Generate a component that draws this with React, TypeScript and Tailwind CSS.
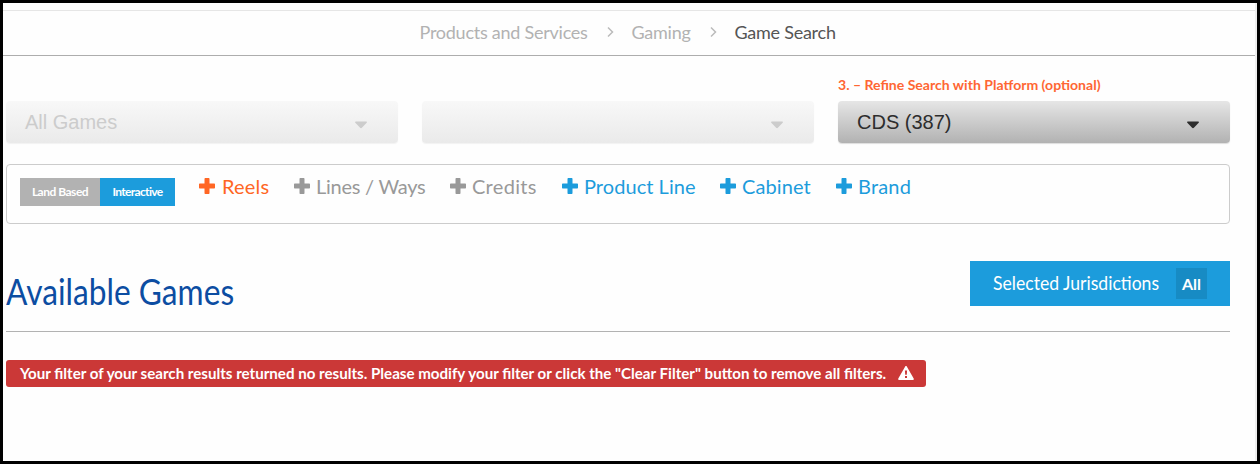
import React from "react";

function Caret({ className }: { className: string }) {
  return (
    <svg className={className} width="12" height="8" viewBox="0 0 12 8" fill="currentColor">
      <path d="M0.8 0.5h10.4c.8 0 1 .7.5 1.200L6.900 6.800c-.5.5-1.300.5-1.800 0L.3 1.700C-.2 1.200 0 .5.8.5z" />
    </svg>
  );
}

function Select({ label, disabled }: { label: string; disabled?: boolean }) {
  return (
    <button
      type="button"
      disabled={disabled}
      className={
        disabled
          ? "flex h-[42px] w-[392px] items-center justify-between rounded-[4px] bg-linear-to-b from-[#f8f8f8] to-[#eaeaea] pr-[31px] pl-[19px] text-[#cccccc] shadow-[0_1px_1px_#f2f2f2]"
          : "flex h-[42px] w-[392px] items-center justify-between rounded-[4px] bg-linear-to-b from-[#e6e6e6] to-[#b2b2b2] pr-[31px] pl-[19px] text-[#2d2d2d] shadow-[0_1px_1px_#dddddd]"
      }
    >
      <span className="font-['Liberation_Sans',Arial,sans-serif] text-[20px] leading-[42px]">{label}</span>
      <Caret className="mt-[5px]" />
    </button>
  );
}

function Plus() {
  return (
    <svg width="16" height="16" viewBox="0 0 16 16" fill="currentColor" className="mt-[-1px] shrink-0">
      <path d="M6.500 0h3c.6 0 1 .4 1 1v4.500H15c.6 0 1 .4 1 1v3c0 .6-.4 1-1 1h-4.500V15c0 .6-.4 1-1 1h-3c-.6 0-1-.4-1-1v-4.500H1c-.6 0-1-.4-1-1v-3c0-.6.4-1 1-1h4.500V1c0-.6.4-1 1-1z" />
    </svg>
  );
}

function Chevron() {
  return (
    <svg width="7" height="12" viewBox="0 0 7 12" fill="none" stroke="#bbbbbb" strokeWidth="1.5" className="mt-[-2px]">
      <path d="M1 1.500L5.500 6L1 10.500" />
    </svg>
  );
}

const filters = [
  { label: "Reels", style: "w-[95px] text-[#ff6624]", text: "pl-px tracking-[0.2px]" },
  { label: "Lines / Ways", style: "w-[156px] text-[#999999]", text: "tracking-[-0.25px]" },
  { label: "Credits", style: "w-[112px] text-[#999999]", text: "tracking-[0.3px]" },
  { label: "Product Line", style: "w-[158px] text-[#1c9cdc]", text: "tracking-[0.05px]" },
  { label: "Cabinet", style: "w-[116px] text-[#1c9cdc]", text: "tracking-[0.1px]" },
  { label: "Brand", style: "w-[90px] text-[#1c9cdc]", text: "tracking-[0.2px]" },
];

export default function App() {
  return (
    <div className="h-[464px] w-[1260px] overflow-hidden border-[3px] border-black bg-[#fefefe] font-['Lato',sans-serif]">
      <div className="h-full w-[1254px] border-r-2 border-[#eeeeee]">
        <div className="h-2 border-b border-[#e6e6e6]" />
        <nav className="flex h-[45px] items-center border-b border-[#adadad] pl-[416.5px] text-[18px] whitespace-nowrap text-[#b2b2b2]">
          <span className="mt-[-2px] w-[187px] tracking-[-0.25px]">Products and Services</span>
          <Chevron />
          <span className="mt-[-2px] ml-[18px] w-[78px] tracking-[-0.25px]">Gaming</span>
          <Chevron />
          <span className="mt-[-2px] ml-[18px] tracking-[-0.25px] text-[#555555]">Game Search</span>
        </nav>
        <main className="ml-[3px] w-[1224px]">
          <section className="flex h-[108px] gap-6 pt-[19px]">
            <div className="pt-[26px]">
              <Select label="All Games" disabled />
            </div>
            <div className="pt-[26px]">
              <Select label="" disabled />
            </div>
            <div>
              <div className="h-[26px] text-[14.06px] leading-[20px] font-bold text-[#ff6633]">3. – Refine Search with Platform (optional)</div>
              <Select label="CDS (387)" />
            </div>
          </section>
          <section className="flex h-[60px] rounded-[4px] border border-[#cccccc] pl-[13px]">
            <div className="mt-[13px] flex h-7 text-[12px] leading-[28px] font-bold whitespace-nowrap text-white">
              <span className="w-20 bg-[#b2b2b2] text-center tracking-[-0.5px]">Land Based</span>
              <span className="w-[75px] bg-[#1c9cdc] text-center tracking-[-0.65px]">Interactive</span>
            </div>
            <div className="mt-[7px] ml-6 flex h-7 text-[20px]">
              {filters.map((f) => (
                <div key={f.label} className={"flex items-center gap-[6px] whitespace-nowrap " + f.style}>
                  <Plus />
                  <span className={f.text}>{f.label}</span>
                </div>
              ))}
            </div>
          </section>
          <section className="flex h-[108px] justify-between border-b border-[#b2b2b2] pt-[37px]">
            <h1 className="origin-left scale-x-[0.88] pt-[6px] text-[36px] leading-[48px] whitespace-nowrap text-[#0c4da2]">Available Games</h1>
            <button type="button" className="flex h-[45px] w-[260px] items-center bg-[#1c9cdc] pl-[23px] text-white">
              <span className="mt-[-4px] w-[183px] origin-left scale-x-[0.88] text-left text-[20px] whitespace-nowrap">Selected Jurisdictions</span>
              <span className="h-[31px] w-[31px] bg-[#178bc4] text-center text-[16px] leading-[31px] font-bold">All</span>
            </button>
          </section>
          <div className="mt-[28px] flex h-[27px] w-[920px] items-center rounded-[3px] bg-[#cb3837] pl-[14px] text-[15.11px] font-bold whitespace-nowrap text-white">
            <span className="w-[878px]">Your filter of your search results returned no results. Please modify your filter or click the "Clear Filter" button to remove all filters.</span>
            <svg width="16" height="14" viewBox="0 0 16 14" fill="currentColor" className="mt-[-1px]">
              <path fillRule="evenodd" d="M7.200.5c.3-.6 1.300-.6 1.600 0l6.900 12c.3.700-.1 1.500-.9 1.500H1.200c-.8 0-1.200-.8-.9-1.500zM6.900 4.500l.3 4.300h1.600l.3-4.300zM7 10v2h2v-2z" />
            </svg>
          </div>
        </main>
      </div>
    </div>
  );
}
